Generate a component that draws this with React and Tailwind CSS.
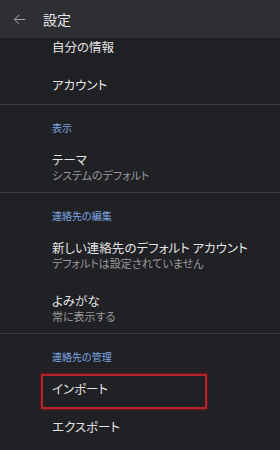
import React from "react";

const font = { fontFamily: '"Noto Sans CJK JP", "Noto Sans", sans-serif' };

function Heading({ children }) {
  return (
    <div className="pl-[52px] pt-[16px] text-[10px] leading-[14px] text-[#7fa6e3]">{children}</div>
  );
}

function Item({ title, sub, pt = "pt-[18px]" }) {
  return (
    <div className={`pl-[52px] ${pt}`}>
      <div className="text-[12.5px] leading-[14px] text-[#e3e3e3]">{title}</div>
      {sub && <div className="mt-px text-[11px] leading-[14px] text-[#9a9a9a]">{sub}</div>}
    </div>
  );
}

export default function App() {
  return (
    <div
      className="w-[280px] h-[450px] overflow-hidden bg-[#202124] [font-feature-settings:'palt']"
      style={font}
    >
      <div className="h-[38px] bg-[#2e2f32] flex items-center">
        <svg viewBox="0 0 24 24" className="ml-[11px] w-[17px] h-[17px]" fill="#a3a4a7">
          <path d="M20 11.4H6.5l5.3-5.3-0.85-0.85L4.2 12l6.75 6.75 0.85-0.85-5.3-5.3H20z" />
        </svg>
        <div className="ml-[15px] text-[14px] text-[#e6e6e6] leading-[18px]">設定</div>
      </div>

      <div className="h-[28px] pl-[52px] pt-[2px] text-[12.5px] leading-[14px] text-[#e3e3e3]">自分の情報</div>
      <div className="h-[39px] pl-[52px] pt-[12px] text-[12.5px] leading-[14px] text-[#e3e3e3] border-b border-[#3a3b3e]">
        アカウント
      </div>

      <Heading>表示</Heading>
      <div className="pb-[10px] border-b border-[#3a3b3e]">
        <Item title="テーマ" sub="システムのデフォルト" />
      </div>

      <Heading>連絡先の編集</Heading>
      <Item title="新しい連絡先のデフォルト アカウント" sub="デフォルトは設定されていません" />
      <div className="pb-[10px] border-b border-[#3a3b3e]">
        <Item title="よみがな" sub="常に表示する" pt="pt-[24px]" />
      </div>

      <Heading>連絡先の管理</Heading>
      <div className="pt-[10px]">
        <div className="ml-[41px] w-[166px] h-[35px] border-2 border-[#b8232b] shadow-[0_0_2px_1px_rgba(150,20,25,0.6)] pl-[9px] pt-[6px] text-[12.5px] leading-[14px] text-[#e3e3e3]">
          インポート
        </div>
      </div>
      <div className="pl-[52px] pt-[11px] text-[12.5px] leading-[14px] text-[#e3e3e3]">エクスポート</div>
    </div>
  );
}
